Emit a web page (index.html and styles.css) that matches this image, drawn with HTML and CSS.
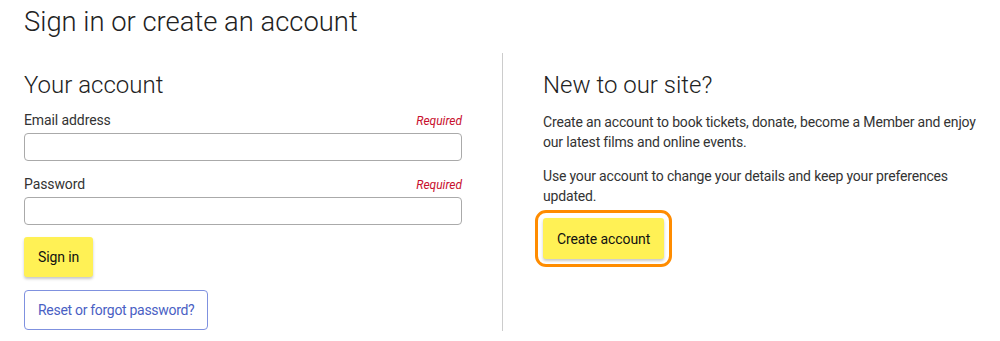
FILE: index.html
```html
<!DOCTYPE html>
<html lang="en">
<head>
  <meta charset="UTF-8" />
  <meta name="viewport" content="width=device-width, initial-scale=1.0"/>
  <title>Sign in or create an account</title>
  <link rel="stylesheet" href="styles.css">
</head>
<body>
  <h1 class="page-title">Sign in or create an account</h1>

  <div class="account-panels">
    <div class="panel panel-signin">
      <h2>Your account</h2>
      <form class="signin-form" onsubmit="return false;">
        <div class="field">
          <div class="field-head">
            <label for="email">Email address</label>
            <span class="required">Required</span>
          </div>
          <input type="email" id="email">
        </div>
        <div class="field">
          <div class="field-head">
            <label for="password">Password</label>
            <span class="required">Required</span>
          </div>
          <input type="password" id="password">
        </div>
        <button class="btn btn-primary" type="submit">Sign in</button>
        <div>
          <a class="btn btn-outline" href="#">Reset or forgot password?</a>
        </div>
      </form>
    </div>

    <div class="panel panel-new">
      <h2>New to our site?</h2>
      <p>Create an account to book tickets, donate, become a Member and enjoy our latest films and online events.</p>
      <p>Use your account to change your details and keep your preferences updated.</p>
      <a class="btn btn-primary btn-focus" href="#">Create account</a>
    </div>
  </div>
</body>
</html>
```

FILE: styles.css
```css
body {
  font-family: Roboto, 'Liberation Sans', Arial, sans-serif;
  color: #333;
  margin: 0;
  padding: 4px 24px 0;
  background: #fff;
}

.page-title {
  margin: 0;
  font-size: 27.4px;
  font-weight: 300;
  line-height: 36px;
  color: #222;
}

h2 {
  margin: 0;
  font-size: 24px;
  font-weight: 300;
  line-height: 30px;
  color: #222;
}

.account-panels {
  display: flex;
  margin-top: 13px;
  width: 956px;
}

.panel {
  padding-top: 17px;
}

.panel-signin {
  width: 438px;
  padding-right: 40px;
  border-right: 1px solid #ccc;
  padding-bottom: 1px;
}

.panel-new {
  flex: 1;
  padding-left: 40px;
}

.signin-form {
  margin-top: 10px;
}

.field {
  margin-bottom: 13px;
}

.field + .field {
  margin-bottom: 12px;
}

.field-head {
  display: flex;
  justify-content: space-between;
  align-items: baseline;
  height: 20px;
  margin-bottom: 3px;
}

label {
  font-size: 14px;
  line-height: 20px;
  color: #333;
  letter-spacing: -0.1px;
}

.required {
  font-size: 12px;
  font-style: italic;
  color: #c8102e;
}

input {
  display: block;
  box-sizing: border-box;
  width: 100%;
  height: 28px;
  border: 1px solid #aaa;
  border-radius: 4px;
  padding: 0 8px;
  font-size: 14px;
}

.btn {
  display: inline-block;
  box-sizing: border-box;
  font-family: inherit;
  font-size: 14px;
  line-height: 20px;
  padding: 10px 14px;
  border-radius: 3px;
  text-decoration: none;
  cursor: pointer;
  letter-spacing: -0.1px;
}

.btn-primary {
  background: #fff155;
  color: #111;
  border: none;
  box-shadow: 0 2px 3px rgba(0,0,0,0.22);
}

.signin-form .btn-primary {
  margin-bottom: 13px;
}

.btn-outline {
  background: #fff;
  color: #4a5fc4;
  border: 1px solid #7f91df;
  border-radius: 4px;
  padding: 9px 13px;
  letter-spacing: -0.3px;
}

.panel-new p {
  font-size: 14px;
  line-height: 20px;
  margin: 12px 0 14px;
  color: #333;
  letter-spacing: -0.17px;
}

.panel-new p + p {
  margin: 0 0 12px;
}

.btn-focus {
  padding: 11px 14px 10px;
  outline: 3px solid #ff8c00;
  outline-offset: 5px;
}
```
